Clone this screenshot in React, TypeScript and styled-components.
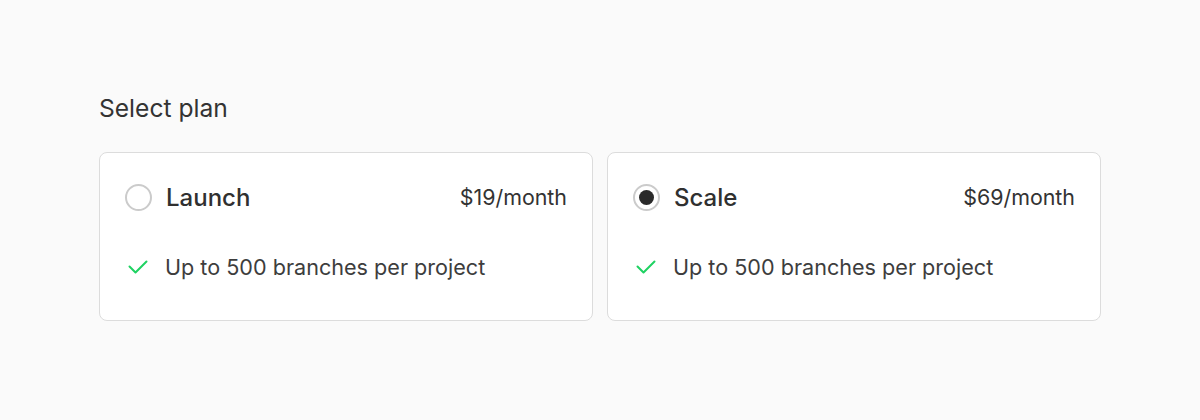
import React from 'react';
import styled, { createGlobalStyle } from 'styled-components';

const GlobalStyle = createGlobalStyle`
  * { box-sizing: border-box; }
  body {
    margin: 0;
    background: #fafafa;
    font-family: Inter, "Noto Sans", sans-serif;
    -webkit-font-smoothing: antialiased;
  }
`;

const Page = styled.main`
  padding: 93px 99px 0;
`;

const Heading = styled.h2`
  margin: 0 0 29px;
  font-size: 24.6px;
  line-height: 30px;
  font-weight: 400;
  color: #333;
`;

const Grid = styled.div`
  display: grid;
  grid-template-columns: 1fr 1fr;
  gap: 14px;
`;

const Card = styled.label`
  display: flex;
  flex-direction: column;
  gap: 40px;
  height: 169px;
  padding: 27px 25px 0;
  background: #fff;
  border: 1px solid #dcdcdc;
  border-radius: 8px;
  cursor: pointer;
`;

const Header = styled.div`
  display: flex;
  align-items: center;
  height: 34px;
`;

const Radio = styled.span<{ $checked: boolean }>`
  flex: none;
  display: grid;
  place-items: center;
  width: 27px;
  height: 27px;
  border-radius: 50%;
  border: 2px solid #cbcbcb;
  background: #fff;

  &::after {
    content: '';
    width: 15px;
    height: 15px;
    border-radius: 50%;
    background: #2a2a2a;
    display: ${(p) => (p.$checked ? 'block' : 'none')};
  }
`;

const Title = styled.span`
  margin-left: 14px;
  font-size: 24px;
  font-weight: 500;
  color: #303030;
`;

const Price = styled.span`
  margin-left: auto;
  font-size: 21.4px;
  color: #333;
`;

const Feature = styled.div`
  display: flex;
  align-items: center;
  height: 26px;
  font-size: 21.6px;
  color: #3d3d3d;
`;

const CheckIcon = styled.svg`
  flex: none;
  width: 20px;
  height: 20px;
  margin: 0 17px 0 3px;
`;

const plans = [
  { name: 'Launch', price: '$19/month', checked: false },
  { name: 'Scale', price: '$69/month', checked: true },
];

export default function App() {
  return (
    <>
      <GlobalStyle />
      <Page>
        <Heading>Select plan</Heading>
        <Grid>
          {plans.map((plan) => (
            <Card key={plan.name}>
              <Header>
                <Radio $checked={plan.checked} />
                <Title>{plan.name}</Title>
                <Price>{plan.price}</Price>
              </Header>
              <Feature>
                <CheckIcon viewBox="0 0 20 20" fill="none">
                  <path
                    d="M1.5 9.5l6 6L18.5 4.5"
                    stroke="#1fd262"
                    strokeWidth="2"
                    strokeLinecap="round"
                    strokeLinejoin="round"
                  />
                </CheckIcon>
                Up to 500 branches per project
              </Feature>
            </Card>
          ))}
        </Grid>
      </Page>
    </>
  );
}
